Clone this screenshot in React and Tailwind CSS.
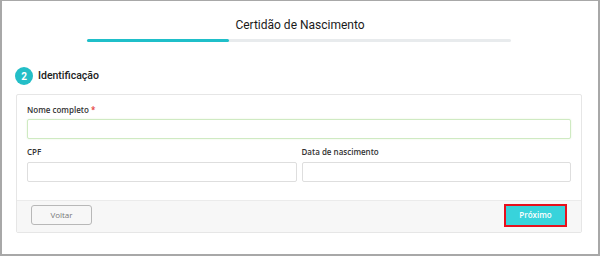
import React from "react";

const Field = ({ label, required, highlight }) => (
  <div className="flex flex-col">
    <label className="h-[12px] text-[8px] leading-[12px] font-semibold text-[#333]">
      {label}
      {required && <span className="text-[#e53935]"> *</span>}
    </label>
    <div
      className={
        highlight
          ? "mt-[3px] h-[20px] rounded-[2px] border border-[#cfeac2] bg-white shadow-[0_0_2px_#e3f3da]"
          : "mt-[4px] h-[20px] rounded-[2px] border border-[#dedede] bg-white"
      }
    />
  </div>
);

export default function App() {
  return (
    <div className="w-[600px] h-[256px] border-t border-x-2 border-b-2 border-[#a8a8a8] bg-white font-['Roboto',sans-serif] flex flex-col">
      {/* header */}
      <div className="flex flex-col items-center pt-[16px]">
        <h1 className="text-[12px] leading-[16px] text-[#1a1a1a]">Certidão de Nascimento</h1>
        <div className="mt-[6px] h-[3px] w-[424px] mr-[2px] rounded-full bg-[#e8ebed]">
          <div className="h-full w-[142px] rounded-full bg-[#1fbfc9]" />
        </div>
      </div>

      {/* step */}
      <div className="mt-[25px] ml-[13px] flex items-center gap-[5px]">
        <span className="flex h-[18px] w-[18px] items-center justify-center rounded-full bg-[#23bec7] text-[10px] font-bold text-white">
          2
        </span>
        <span className="text-[10.5px] leading-[18px] font-medium text-[#222]">Identificação</span>
      </div>

      {/* card */}
      <div className="mt-[9px] ml-[14px] w-[566px] rounded-[2px] border border-[#e6e6e6] font-['Open_Sans',sans-serif]">
        <div className="px-[10px] pt-[9px] pb-[18px]">
          <Field label="Nome completo" required highlight />
          <div className="mt-[7px] grid grid-cols-2 gap-[5px]">
            <Field label="CPF" />
            <Field label="Data de nascimento" />
          </div>
        </div>
        <div className="flex h-[32px] items-center justify-between border-t border-[#ebebeb] bg-[#f7f7f7] px-[14px] pb-[3px]">
          <button className="h-[20px] w-[61px] rounded-[3px] border border-[#b8b8b8] bg-[#f7f7f7] text-[8px] text-[#777]">
            Voltar
          </button>
          <button className="h-[23px] w-[63px] border-2 border-[#e8101c] bg-[#38d3db] text-[8px] font-semibold text-white">
            Próximo
          </button>
        </div>
      </div>
    </div>
  );
}
